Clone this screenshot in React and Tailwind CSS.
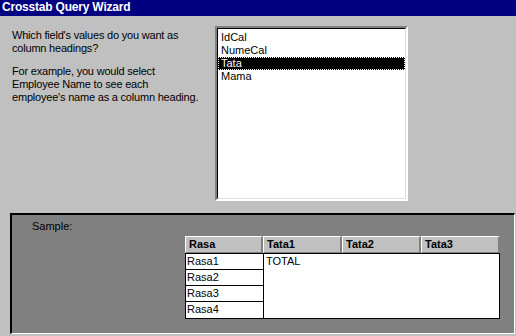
import React from "react";

const font = { fontFamily: '"Liberation Sans", Arial, sans-serif' };

function HeaderCell({ children, w }) {
  return (
    <div
      className={`${w} h-[17px] bg-[#c0c0c0] border-t border-l border-t-white border-l-white border-r-2 border-b border-r-[#808080] border-b-[#808080] pl-[3px] text-[11px] font-bold leading-[14px] text-black`}
    >
      {children}
    </div>
  );
}

export default function App() {
  const items = ["IdCal", "NumeCal", "Tata", "Mama"];
  return (
    <div className="w-[516px] h-[336px] bg-[#c0c0c0] overflow-hidden" style={font}>
      <div className="h-[16px] bg-[#000080] pl-[2px] text-white font-bold text-[12px] leading-[15px] tracking-[-0.2px]">
        Crosstab Query Wizard
      </div>
      <div className="flex h-[197px]">
        <div className="w-[215px] pl-[12px] pt-[13px] text-[11px] leading-[13px] text-black tracking-[-0.2px]">
          <p>Which field's values do you want as</p>
          <p>column headings?</p>
          <p className="mt-[10px]">For example, you would select</p>
          <p>Employee Name to see each</p>
          <p>employee's name as a column heading.</p>
        </div>
        <div className="mt-[10px] w-[193px] h-[175px] border-2 border-t-[#808080] border-l-[#808080] border-r-white border-b-white">
          <div className="w-full h-full bg-white border border-t-black border-l-black border-r-[#dfdfdf] border-b-[#dfdfdf] pt-[2px]">
            {items.map((it) => (
              <div
                key={it}
                className={
                  it === "Tata"
                    ? "h-[13px] bg-black text-white pl-[3px] text-[11px] leading-[13px] outline-1 outline-dotted outline-white -outline-offset-1"
                    : "h-[13px] pl-[3px] text-[11px] leading-[13px] text-black"
                }
              >
                {it}
              </div>
            ))}
          </div>
        </div>
      </div>
      <div className="ml-[10px] w-[505px] h-[121px] border-t-2 border-l-2 border-t-black border-l-black border-r border-b border-r-white border-b-white bg-[#808080]">
        <div className="pl-[20px] pt-[5px] text-[11px] leading-[13px] text-black">Sample:</div>
        <div className="ml-[173px] mt-[3px] w-[315px]">
          <div className="flex">
            <HeaderCell w="w-[78px]">Rasa</HeaderCell>
            <HeaderCell w="w-[79px]">Tata1</HeaderCell>
            <HeaderCell w="w-[79px]">Tata2</HeaderCell>
            <HeaderCell w="w-[79px]">Tata3</HeaderCell>
          </div>
          <div className="flex bg-white border border-black">
            <div className="w-[77px]">
              {["Rasa1", "Rasa2", "Rasa3", "Rasa4"].map((r, i) => (
                <div
                  key={r}
                  className={`h-[16px] pl-[1px] text-[11px] leading-[15px] text-black ${i < 3 ? "border-b border-black" : ""}`}
                >
                  {r}
                </div>
              ))}
            </div>
            <div className="flex-1 border-l border-black pl-[2px] text-[11px] leading-[14px] text-black">
              TOTAL
            </div>
          </div>
        </div>
      </div>
    </div>
  );
}
